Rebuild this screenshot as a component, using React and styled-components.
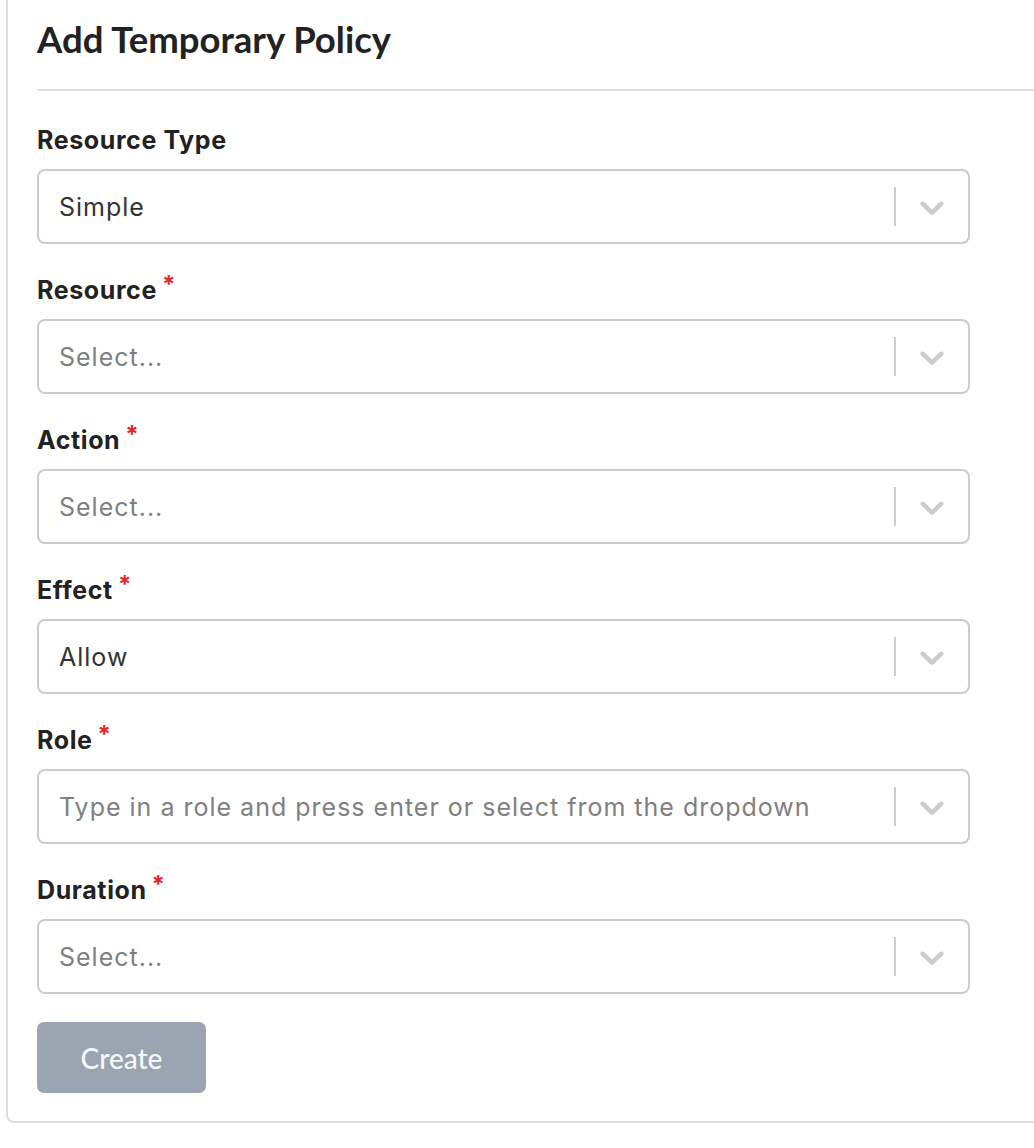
import React from "react";
import styled, { createGlobalStyle } from "styled-components";

const Global = createGlobalStyle`
  html, body { margin: 0; padding: 0; background: #fff; }
  body { font-family: Inter, "Noto Sans", sans-serif; }
  * { box-sizing: border-box; }
`;

const Panel = styled.section`
  margin-left: 6px;
  width: 1040px;
  border-left: 2px solid #dedede;
  border-bottom: 2px solid #dedede;
  border-bottom-left-radius: 8px;
  padding: 0 0 28px 29px;
`;

const Title = styled.h1`
  margin: 0;
  padding-top: 17px;
  height: 91px;
  font-family: Lato, sans-serif;
  font-weight: 700;
  font-size: 36.5px;
  color: #222;
  border-bottom: 2px solid #dedede;
`;

const Form = styled.form`
  display: flex;
  flex-direction: column;
  width: 933px;
  padding-top: 34px;
`;

const Field = styled.div`
  display: flex;
  flex-direction: column;
  margin-bottom: 31px;
`;

const Label = styled.label`
  display: flex;
  align-items: flex-start;
  gap: 5px;
  height: 44px;
  font-family: Inter, sans-serif;
  font-weight: 700;
  font-size: 25px;
  letter-spacing: 0.6px;
  line-height: 30px;
  color: #222;
`;

const Star = styled.span`
  color: #e3262b;
  font-size: 24px;
  line-height: 1;
  margin-top: -2px;
`;

const Control = styled.div`
  display: flex;
  align-items: center;
  height: 75px;
  border: 2px solid #cccccc;
  border-radius: 8px;
  background: #fff;
`;

const Value = styled.div`
  flex: 1;
  padding: 0 20px;
  font-family: Inter, sans-serif;
  font-size: 25px;
  letter-spacing: 1px;
  color: ${(p) => (p.$placeholder ? "#808080" : "#333")};
  white-space: nowrap;
  overflow: hidden;
`;

const Separator = styled.span`
  align-self: stretch;
  width: 2px;
  margin: 16px 0;
  background: #cccccc;
`;

const Indicator = styled.div`
  display: flex;
  padding: 0 16px;
  color: #cccccc;
`;

const Button = styled.button`
  align-self: flex-start;
  width: 169px;
  height: 71px;
  margin-top: -3px;
  border: none;
  border-radius: 7px;
  background: #9aa5b1;
  color: #f6f7f9;
  font-family: Lato, sans-serif;
  font-size: 28px;
  font-weight: 500;
`;

const Chevron = () => (
  <svg width="40" height="40" viewBox="0 0 20 20" fill="currentColor">
    <path d="M4.516 7.548c0.436-0.446 1.043-0.481 1.576 0l3.908 3.747 3.908-3.747c0.533-0.481 1.141-0.446 1.574 0 0.436 0.445 0.408 1.197 0 1.615-0.406 0.418-4.695 4.502-4.695 4.502-0.217 0.223-0.502 0.335-0.787 0.335s-0.57-0.112-0.789-0.335c0 0-4.287-4.084-4.695-4.502s-0.436-1.17 0-1.615z" />
  </svg>
);

const fields = [
  { label: "Resource Type", value: "Simple" },
  { label: "Resource", required: true, placeholder: "Select..." },
  { label: "Action", required: true, placeholder: "Select..." },
  { label: "Effect", required: true, value: "Allow" },
  { label: "Role", required: true, placeholder: "Type in a role and press enter or select from the dropdown" },
  { label: "Duration", required: true, placeholder: "Select..." },
];

export default function App() {
  return (
    <>
      <Global />
      <Panel>
        <Title>Add Temporary Policy</Title>
        <Form onSubmit={(e) => e.preventDefault()}>
          {fields.map((f) => (
            <Field key={f.label}>
              <Label>
                {f.label}
                {f.required && <Star>*</Star>}
              </Label>
              <Control>
                <Value $placeholder={!f.value}>{f.value || f.placeholder}</Value>
                <Separator />
                <Indicator>
                  <Chevron />
                </Indicator>
              </Control>
            </Field>
          ))}
          <Button type="submit" disabled>Create</Button>
        </Form>
      </Panel>
    </>
  );
}
